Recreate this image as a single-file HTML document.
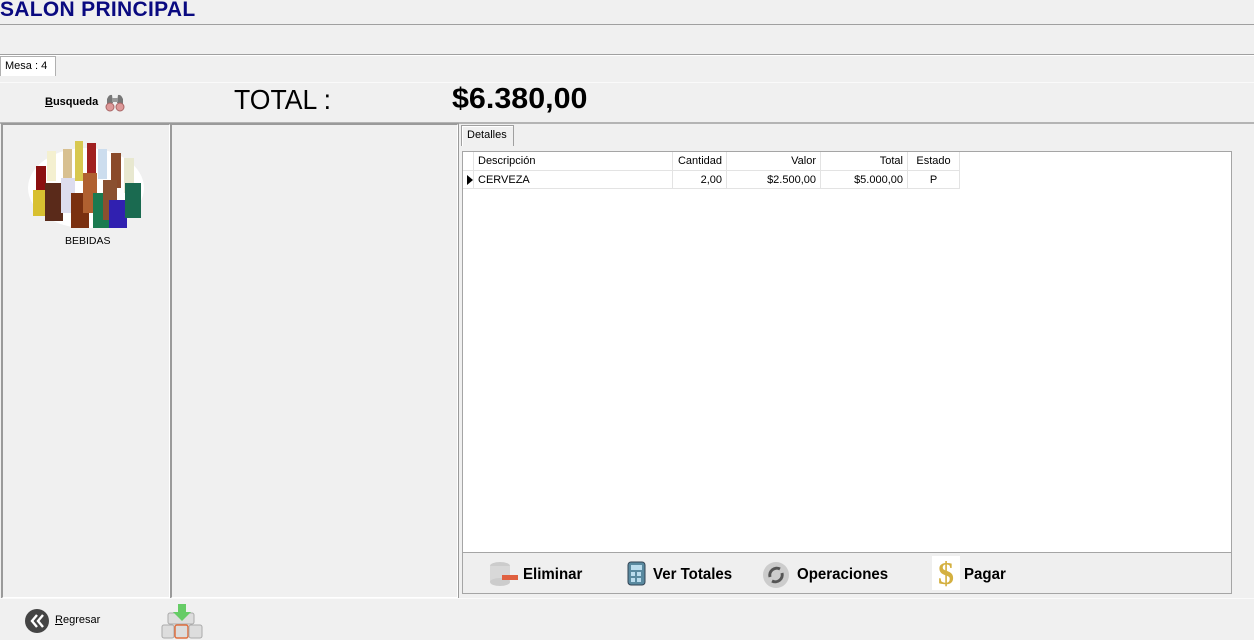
<!DOCTYPE html>
<html><head><meta charset="utf-8"><style>
*{margin:0;padding:0;box-sizing:border-box}
body{width:1254px;height:640px;background:#f0f0f0;position:relative;overflow:hidden;font-family:"Liberation Sans",sans-serif;font-size:11px;color:#000}
.a{position:absolute}
.cell{position:absolute;top:0;height:18px;line-height:18px;border-right:1px solid #e3e3e3;padding:0 4px;font-size:11px}
.btn{position:absolute;top:566px;font-weight:bold;font-size:16px;font-family:"Liberation Sans",sans-serif;transform:scaleX(.94);transform-origin:left}
</style></head><body>
<div class="a" style="left:0;top:-2px;font:bold 21px 'Liberation Sans',sans-serif;color:#0a0a80;letter-spacing:0.3px">SALON PRINCIPAL</div>
<div class="a" style="left:0;top:24px;width:1254px;height:1px;background:#a0a0a0"></div>
<div class="a" style="left:0;top:54px;width:1254px;height:1px;background:#a0a0a0"></div>
<div class="a" style="left:0;top:55px;width:1254px;height:1px;background:#fff"></div>
<div class="a" style="left:0;top:56px;width:56px;height:20px;background:#fff;border:1px solid #b0b0b0;border-bottom:none;box-shadow:inset 1px 1px #fff;font-size:11px;line-height:18px;padding-left:4px">Mesa : 4</div>
<div class="a" style="left:0;top:82px;width:1254px;height:1px;background:#fafafa"></div>
<div class="a" style="left:45px;top:96px;font-weight:bold;font-size:11px"><u>B</u>usqueda</div>
<svg class="a" style="left:104px;top:93px" width="22" height="19" viewBox="0 0 22 19"><path d="M3 6 Q5 1 8 2 L9 10 L3 11Z M19 6 Q17 1 14 2 L13 10 L19 11Z" fill="#777"/><rect x="8" y="5" width="6" height="4" fill="#999"/><ellipse cx="6" cy="14" rx="4" ry="4" fill="#d99" stroke="#a66"/><ellipse cx="16" cy="14" rx="4" ry="4" fill="#d99" stroke="#a66"/></svg>
<div class="a" style="left:234px;top:84px;font:28px 'Liberation Sans',sans-serif;transform:scaleX(.95);transform-origin:left">TOTAL :</div>
<div class="a" style="left:452px;top:83px;font:bold 29px 'Liberation Sans',sans-serif;transform:scaleX(1.05);transform-origin:left">$6.380,00</div>
<div class="a" style="left:0;top:122px;width:1254px;height:2px;background:#b4b4b4"></div>
<div class="a" style="left:1px;top:123px;width:170px;height:476px;border:2px solid #9a9a9a;border-right-color:#fff;border-bottom-color:#fff"></div>
<div class="a" style="left:170px;top:123px;width:289px;height:476px;border:2px solid #9a9a9a;border-right-color:#fff;border-bottom-color:#fff"></div>
<div class="a" style="left:458px;top:123px;width:1px;height:476px;background:#9a9a9a"></div>
<svg class="a" style="left:25px;top:138px" width="122" height="94" viewBox="0 0 122 94">
<ellipse cx="61" cy="50" rx="58" ry="40" fill="#fff"/>
<rect x="11" y="28" width="10" height="25" fill="#8b1010"/><rect x="22" y="13" width="9" height="30" fill="#f4f0d0"/><rect x="38" y="11" width="9" height="35" fill="#d8c090"/><rect x="50" y="3" width="8" height="40" fill="#d8c850"/><rect x="62" y="5" width="9" height="40" fill="#a02020"/><rect x="73" y="11" width="9" height="30" fill="#cde"/><rect x="86" y="15" width="10" height="35" fill="#8a4a2a"/><rect x="99" y="20" width="10" height="35" fill="#e8e8d0"/>
<rect x="8" y="52" width="12" height="26" fill="#d8c030"/><rect x="20" y="45" width="18" height="38" fill="#5a2a1a"/><rect x="36" y="40" width="14" height="35" fill="#dde"/><rect x="46" y="55" width="18" height="35" fill="#7a3010"/><rect x="58" y="35" width="14" height="40" fill="#b06030"/><rect x="68" y="55" width="17" height="35" fill="#1a7a50"/><rect x="78" y="42" width="14" height="40" fill="#8a5030"/><rect x="84" y="62" width="18" height="28" fill="#3020b0"/><rect x="100" y="45" width="16" height="35" fill="#1a6a50"/>
</svg>
<div class="a" style="left:65px;top:235px;font-size:10.5px">BEBIDAS</div>
<div class="a" style="left:461px;top:125px;width:53px;height:21px;border:1px solid #a0a0a0;border-bottom:none;box-shadow:inset 1px 1px #fff;font-size:11px;line-height:18px;padding-left:5px">Detalles</div>
<div class="a" style="left:462px;top:151px;width:770px;height:402px;background:#fff;border:1px solid #a5a5a5"></div>
<div class="a" style="left:463px;top:152px;width:497px;height:19px;background:#fff;border-bottom:1px solid #e3e3e3">
<div class="cell" style="left:0;width:11px"></div>
<div class="cell" style="left:11px;width:199px">Descripción</div>
<div class="cell" style="left:210px;width:54px;text-align:right">Cantidad</div>
<div class="cell" style="left:264px;width:94px;text-align:right">Valor</div>
<div class="cell" style="left:358px;width:87px;text-align:right">Total</div>
<div class="cell" style="left:445px;width:52px;text-align:center">Estado</div></div>
<div class="a" style="left:463px;top:171px;width:497px;height:18px;background:#fff;border-bottom:1px solid #e3e3e3">
<div class="cell" style="left:0;width:11px"><svg width="6" height="10" style="position:absolute;left:4px;top:4px"><path d="M0 0L6 5L0 10Z"/></svg></div>
<div class="cell" style="left:11px;width:199px">CERVEZA</div>
<div class="cell" style="left:210px;width:54px;text-align:right">2,00</div>
<div class="cell" style="left:264px;width:94px;text-align:right">$2.500,00</div>
<div class="cell" style="left:358px;width:87px;text-align:right">$5.000,00</div>
<div class="cell" style="left:445px;width:52px;text-align:center">P</div></div>
<div class="a" style="left:462px;top:552px;width:770px;height:42px;border:1px solid #a5a5a5;background:#efefef"></div>
<svg class="a" style="left:488px;top:560px" width="30" height="28"><ellipse cx="12" cy="6" rx="10" ry="4" fill="#ccc"/><rect x="2" y="6" width="20" height="16" fill="#d8d8d8"/><ellipse cx="12" cy="22" rx="10" ry="4" fill="#ccc"/><rect x="14" y="15" width="16" height="5" fill="#e06040"/></svg>
<div class="btn" style="left:523px">Eliminar</div>
<svg class="a" style="left:627px;top:561px" width="20" height="25"><rect x="1" y="1" width="17" height="23" rx="3" fill="#5a8aa0" stroke="#345"/><rect x="4" y="4" width="11" height="5" fill="#bde"/><rect x="4" y="11" width="4" height="4" fill="#bde"/><rect x="10" y="11" width="4" height="4" fill="#bde"/><rect x="4" y="17" width="4" height="4" fill="#bde"/><rect x="10" y="17" width="4" height="4" fill="#bde"/></svg>
<div class="btn" style="left:653px">Ver Totales</div>
<svg class="a" style="left:762px;top:561px" width="28" height="28"><circle cx="14" cy="14" r="13" fill="#ccc"/><path d="M8 16 A7 7 0 0 1 18 8 M20 12 A7 7 0 0 1 10 20" stroke="#555" stroke-width="3" fill="none"/></svg>
<div class="btn" style="left:797px">Operaciones</div>
<div class="a" style="left:932px;top:556px;width:28px;height:34px;background:#fff;font:bold 32px 'Liberation Serif',serif;color:#d4b040;text-align:center;line-height:34px">$</div>
<div class="btn" style="left:964px">Pagar</div>
<div class="a" style="left:0;top:598px;width:1254px;height:1px;background:#fafafa"></div>
<svg class="a" style="left:24px;top:608px" width="26" height="26"><circle cx="13" cy="13" r="12" fill="#444"/><path d="M13 7L8 13L13 19M19 7L14 13L19 19" stroke="#fff" stroke-width="2.4" fill="none"/></svg>
<div class="a" style="left:55px;top:614px;font-size:11px"><u>R</u>egresar</div>
<svg class="a" style="left:160px;top:603px" width="44" height="36"><rect x="8" y="10" width="26" height="11" rx="2" fill="#ddd" stroke="#aaa"/><rect x="2" y="22" width="12" height="13" rx="2" fill="#ddd" stroke="#aaa"/><rect x="15" y="22" width="13" height="13" rx="2" fill="#ddd" stroke="#e07040" stroke-width="1.5"/><rect x="29" y="22" width="13" height="13" rx="2" fill="#ddd" stroke="#aaa"/><path d="M18 1h8v8h5l-9 9l-9-9h5z" fill="#6c6"/></svg>
</body></html>
